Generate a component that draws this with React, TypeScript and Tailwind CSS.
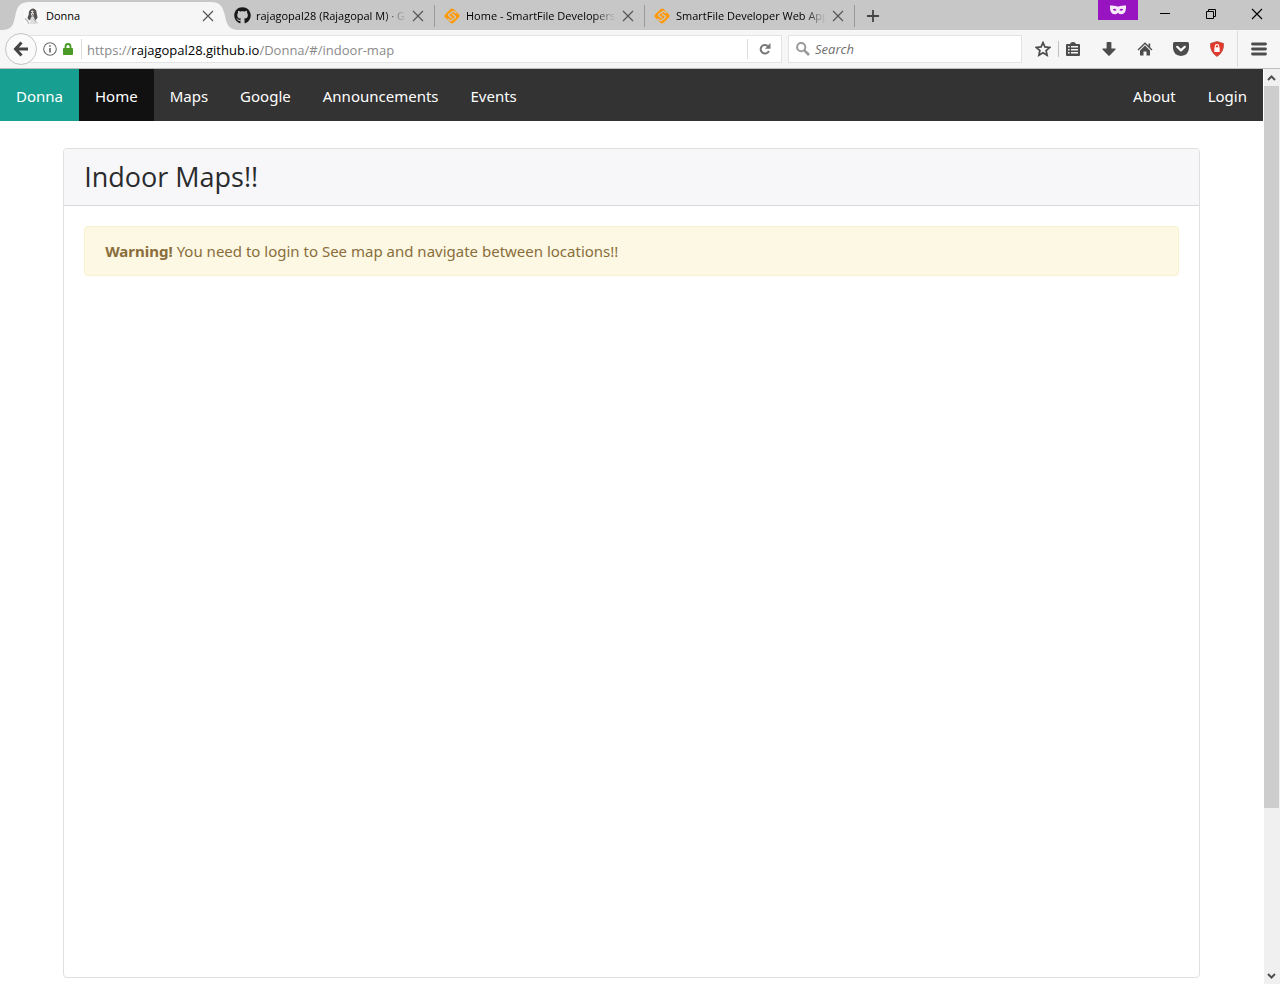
import type { ReactNode } from 'react';
import { FaGithub } from 'react-icons/fa';

function CloseIcon({ className }: { className: string }) {
  return (
    <svg viewBox="0 0 12 12" className={className} fill="none" stroke="currentColor" strokeWidth="1.2" aria-hidden="true">
      <path d="M1 1 11 11M11 1 1 11" />
    </svg>
  );
}

function SmartFileLogo() {
  return (
    <svg viewBox="0 0 16 16" className="h-4 w-4" aria-hidden="true">
      <path d="M8 .4 Q8.900 .4 9.600 1 L15.200 6.600 Q16 8 15.200 9.200 L9.600 14.800 Q8 16 6.400 14.800 L.8 9.200 Q0 8 .8 6.800 L6.400 1.200 Q7.100 .4 8 .4Z" fill="#ff9a0c" />
      <path
        d="M12.400 5.200 10.600 3.700 Q9.600 3 8.600 3.800 L5 6.300 Q4.200 7 5 7.700 L7.800 9.900M3.600 10.800 5.400 12.300 Q6.400 13 7.400 12.200 L11 9.700 Q11.800 9 11 8.300 L8.200 6.100"
        fill="none"
        stroke="#c7c7c7"
        strokeWidth="1.3"
      />
    </svg>
  );
}

function PortraitIcon() {
  return (
    <svg viewBox="0 0 16 16" className="h-4 w-4" aria-hidden="true">
      <rect width="16" height="16" fill="#fafafa" />
      <path d="M5 3.500 Q6.500 .2 9.500 .4 Q12.800 1.500 12.600 5 L13.600 9.500 11.500 12.500 8 11 5 12.200 3.400 9.800 4.600 7Z" fill="#555" />
      <path d="M7 3 Q9 1.800 9.900 4 L9.600 7 8.500 8.600 7 7Z" fill="#e2d8d4" />
      <path d="M7.500 8.500 9.500 8.300 11 12 14.500 14.500 13 16 6 16 6.500 11Z" fill="#ddd" />
      <path d="M1 10.500 3.500 13 5 16M10 11.500 12 14" stroke="#bbb" strokeWidth="1.300" fill="none" />
      <path d="M7 4.500h1M9 4.500h1M8 6.700h1" stroke="#444" strokeWidth=".8" />
    </svg>
  );
}

function Tab({ title, icon, active = false }: { title: string; icon: ReactNode; active?: boolean }) {
  return (
    <div className="relative flex h-[30px] w-[210px] items-center pt-px pr-[11px] pl-[9px]">
      {active && (
        <svg viewBox="0 0 240 30" className="absolute top-0 -left-[15px] h-[30px] w-[240px]" aria-hidden="true">
          <path d="M2 30C12 30 13 25 15 17C17 7 19 2 30 2H211C221 2 223 8 225 16C227 25 229 30 239 30Z" fill="#f6f6f6" />
        </svg>
      )}
      <button type="button" className="relative flex min-w-0 flex-1 items-center gap-[6px] text-left">
        <span className="flex w-4 shrink-0 justify-center">{icon}</span>
        <span
          className={
            active
              ? 'flex-1 overflow-hidden text-[11px] leading-4 whitespace-nowrap'
              : 'flex-1 overflow-hidden mask-r-from-85% mask-r-to-100% text-[11px] leading-4 whitespace-nowrap'
          }
        >
          {title}
        </span>
      </button>
      <button type="button" aria-label={`Close ${title}`} className="relative ml-[6px] shrink-0 text-[#555]">
        <CloseIcon className="h-3 w-3" />
      </button>
    </div>
  );
}

function TabStrip() {
  return (
    <header className="flex h-[30px] shrink-0 bg-[#c7c7c7] pl-[15px]">
      <Tab title="Donna" icon={<PortraitIcon />} active />
      <Tab title="rajagopal28 (Rajagopal M) · GitHub" icon={<FaGithub className="h-[17px] w-[17px] shrink-0 text-[#191717]" />} />
      <Divider />
      <Tab title="Home - SmartFile Developers" icon={<SmartFileLogo />} />
      <Divider />
      <Tab title="SmartFile Developer Web Application" icon={<SmartFileLogo />} />
      <Divider />
      <button type="button" aria-label="New tab" className="ml-3 text-[#444]">
        <svg viewBox="0 0 12 12" className="mt-px h-3 w-3" fill="none" stroke="currentColor" strokeWidth="1.8" aria-hidden="true">
          <path d="M6 0V12M0 6H12" />
        </svg>
      </button>
      <div className="ml-auto flex items-start">
        <span className="flex h-5 w-10 items-center justify-center bg-[#9714c0]">
          <svg viewBox="0 0 16 10" className="h-[10px] w-4" aria-label="Private browsing">
            <path
              fillRule="evenodd"
              d="M0 .5 Q3 .2 6 1 Q8 2 10 1 Q13 .2 16 .5 Q16.500 9.300 11 9.300 Q9.500 9.300 8 7.800 Q6.500 9.300 5 9.300 Q-.5 9.300 0 .5ZM2.800 4.500 Q4.500 6.600 6.600 5 Q4.800 2.800 2.800 4.500ZM13.200 4.500 Q11.500 6.600 9.400 5 Q11.200 2.800 13.200 4.500Z"
              fill="#f8e8fb"
            />
          </svg>
        </span>
        <button type="button" aria-label="Minimize" className="ml-1 flex h-7 w-[46px] items-center justify-center">
          <svg viewBox="0 0 10 10" className="h-[10px] w-[10px]" fill="none" stroke="#000" aria-hidden="true"><path d="M0 4.500H10" /></svg>
        </button>
        <button type="button" aria-label="Restore" className="flex h-7 w-[46px] items-center justify-center">
          <svg viewBox="0 0 10 10" className="h-[10px] w-[10px]" fill="none" stroke="#000" aria-hidden="true">
            <path d="M.5 2.500H7.500V9.500H.5ZM2.500 2.500V.5H9.500V7.500H7.500" />
          </svg>
        </button>
        <button type="button" aria-label="Close window" className="flex h-7 w-[46px] items-center justify-center text-black">
          <CloseIcon className="h-3 w-3" />
        </button>
      </div>
    </header>
  );
}

function Divider() {
  return <span className="mt-[5px] -ml-px h-[22px] w-px shrink-0 bg-[#999]" />;
}

function ToolButton({ label, children }: { label: string; children: ReactNode }) {
  return (
    <button type="button" aria-label={label} className="flex h-7 w-9 items-center justify-center text-[#4c4c4c]">
      <svg viewBox="0 0 16 16" className="h-4 w-4" fill="currentColor" aria-hidden="true">
        {children}
      </svg>
    </button>
  );
}

function Toolbar() {
  return (
    <div className="flex h-[39px] shrink-0 items-center border-b border-[#bdbdbd] bg-[#f6f6f6] pl-[5px]">
      <button
        type="button"
        aria-label="Back"
        className="z-10 -mr-4 flex h-8 w-8 shrink-0 items-center justify-center rounded-full border border-[#c4c4c4] bg-[#fafafa] text-[#444]"
      >
        <svg viewBox="0 0 16 16" className="h-4 w-4" fill="none" stroke="currentColor" strokeWidth="3" aria-hidden="true">
          <path d="M8.500 1.500 2.500 8 8.500 14.500M3 8H15" />
        </svg>
      </button>
      <div className="flex h-7 min-w-0 flex-1 items-center border border-[#e3e3e3] bg-white pl-[21px]">
        <svg viewBox="0 0 14 14" className="h-[14px] w-[14px] shrink-0" fill="none" stroke="#6d6d6d" aria-hidden="true">
          <circle cx="7" cy="7" r="6.300" strokeWidth="1.100" />
          <path d="M7 6V10.600M7 3.200V4.800" strokeWidth="1.700" />
        </svg>
        <svg viewBox="0 0 10 12" className="ml-[6px] h-3 w-[10px] shrink-0" aria-hidden="true">
          <path d="M2.500 6V3.500a2.500 2.500 0 0 1 5 0V6" fill="none" stroke="#4b9a25" strokeWidth="1.800" />
          <rect y="5" width="10" height="7" rx=".8" fill="#4b9a25" />
        </svg>
        <span className="mr-[5px] ml-2 h-5 w-px bg-[#ddd]" />
        <div role="textbox" aria-label="Address" tabIndex={0} className="min-w-0 flex-1 truncate pt-px text-[13px] leading-5 text-[#8a8a8a]">
          https://<span className="text-black">rajagopal28.github.io</span>/Donna/#/indoor-map
        </div>
        <button type="button" aria-label="Reload" className="flex h-5 w-[34px] items-center justify-center border-l border-[#ddd]">
          <svg viewBox="0 0 12 12" className="h-3 w-3" aria-hidden="true">
            <path d="M9 3.200A4.300 4.300 0 1 0 9.900 8" fill="none" stroke="#777" strokeWidth="2" />
            <path d="M11.500 0V5.700H5.800Z" fill="#777" />
          </svg>
        </button>
      </div>
      <label className="ml-[6px] flex h-7 w-[234px] shrink-0 items-center gap-[5px] border border-[#e3e3e3] bg-white pl-[7px]">
        <svg viewBox="0 0 14 14" className="h-[14px] w-[14px] shrink-0" fill="none" stroke="#999" aria-hidden="true">
          <circle cx="5.200" cy="5.200" r="4.100" strokeWidth="2" />
          <path d="M8.300 8.300 13 13" strokeWidth="2.600" />
        </svg>
        <input
          type="search"
          aria-label="Search"
          placeholder="Search"
          className="w-full min-w-0 pt-px text-[13px] outline-none placeholder:text-[#6f6f6f] placeholder:italic"
        />
      </label>
      <div className="ml-[5px] flex shrink-0 items-center">
        <button type="button" aria-label="Bookmark" className="flex h-7 w-8 items-center justify-center text-[#4c4c4c]">
          <svg viewBox="0 0 16 16" className="h-4 w-4" fill="none" stroke="currentColor" strokeWidth="1.700" aria-hidden="true">
            <path d="M8 1.600 9.900 5.900 14.700 6.400 11.100 9.500 12.100 14.200 8 11.800 3.900 14.200 4.900 9.500 1.300 6.400 6.100 5.900Z" />
          </svg>
        </button>
        <span className="-mr-1 -ml-px h-4 w-px bg-[#c0c0c0]" />
        <ToolButton label="Bookmarks list">
          <path fillRule="evenodd" d="M5 3 Q5.500 1 8 1 Q10.500 1 11 3H14Q15 3 15 4V14Q15 15 14 15H2Q1 15 1 14V4Q1 3 2 3ZM3 5V6.600H4.600V5ZM6 5V6.600H13V5ZM3 8V9.600H4.600V8ZM6 8V9.600H13V8ZM3 11V12.600H4.600V11ZM6 11V12.600H13V11Z" />
        </ToolButton>
        <ToolButton label="Downloads">
          <path d="M5.600 1.500Q5.600 1 6.100 1H9.900Q10.400 1 10.400 1.500V7.500H14.300Q15 7.800 14.500 8.500L8.700 14.500Q8 15.200 7.300 14.500L1.500 8.500Q1 7.800 1.700 7.500H5.600Z" />
        </ToolButton>
        <ToolButton label="Home">
          <path d="M8 4.600 13 9.500V14.500H9.500V10.500H6.500V14.500H3V9.500Z" />
          <path d="M1 9 8 2.200 15 9" fill="none" stroke="currentColor" strokeWidth="1.300" />
          <path d="M11.500 2.500H13.200V6.500L11.500 5Z" />
        </ToolButton>
        <ToolButton label="Pocket">
          <path d="M1.500 1H14.500Q16 1 16 2.500V7Q15.500 14.500 8 15Q.5 14.500 0 7V2.500Q0 1 1.500 1Z" />
          <path d="M4.200 5.800 8 9.400 11.800 5.800" fill="none" stroke="#fff" strokeWidth="2.200" strokeLinecap="round" strokeLinejoin="round" />
        </ToolButton>
        <ToolButton label="Ad blocker">
          <path d="M8 .5 14.500 2.500Q15 11 8 15.500Q1 11 1.500 2.500Z" fill="#e3382a" stroke="#b5493e" strokeWidth=".8" />
          <rect x="5.300" y="6.300" width="5.400" height="4.600" rx=".5" fill="#fff" />
          <path d="M6.300 6.500V5.300a1.700 1.700 0 0 1 3.400 0V6.500" fill="none" stroke="#fff" strokeWidth="1.100" />
        </ToolButton>
        <span className="ml-[2px] h-9 w-px bg-[#dcdcdc]" />
        <button type="button" aria-label="Menu" className="flex h-7 w-[42px] items-center justify-center text-[#4c4c4c]">
          <svg viewBox="0 0 16 14" className="h-[14px] w-4" stroke="currentColor" strokeWidth="2.800" strokeLinecap="round" aria-hidden="true">
            <path d="M1.500 2H14.500M1.500 7H14.500M1.500 12H14.500" />
          </svg>
        </button>
      </div>
    </div>
  );
}

const mainLinks = ['Maps', 'Google', 'Announcements', 'Events'];
const sideLinks = ['About', 'Login'];

function SiteNav() {
  return (
    <nav className="flex h-[52px] shrink-0 items-stretch bg-[#333] text-[15px] text-white">
      <a href="#/" className="flex items-center bg-[#17a092] px-4 pt-[2px]">Donna</a>
      <a href="#/home" className="flex items-center bg-[#111] px-4 pt-[2px]">Home</a>
      {mainLinks.map((name) => (
        <a key={name} href={`#/${name.toLowerCase()}`} className="flex items-center px-4 pt-[2px]">{name}</a>
      ))}
      <div className="ml-auto flex">
        {sideLinks.map((name) => (
          <a key={name} href={`#/${name.toLowerCase()}`} className="flex items-center px-4 pt-[2px]">{name}</a>
        ))}
      </div>
    </nav>
  );
}

function ScrollRail() {
  return (
    <div className="ml-px flex w-4 shrink-0 flex-col items-center bg-[#f0f0f0]" aria-hidden="true">
      <svg viewBox="0 0 16 17" className="h-[17px] w-4 shrink-0" fill="none" stroke="#505050" strokeWidth="2"><path d="M4 11 7.500 7.500 11 11" /></svg>
      <div className="mr-px flex w-[15px] flex-1 flex-col">
        <div className="h-[82%] bg-[#cdcdcd]" />
      </div>
      <svg viewBox="0 0 16 17" className="h-[17px] w-4 shrink-0" fill="none" stroke="#505050" strokeWidth="2"><path d="M4 7 7.500 10.500 11 7" /></svg>
    </div>
  );
}

export default function App() {
  return (
    <div className="flex h-screen flex-col bg-white font-['Open_Sans','Noto_Sans',sans-serif] text-black">
      <TabStrip />
      <Toolbar />
      <div className="flex min-h-0 flex-1 font-['Noto_Sans','Open_Sans',sans-serif]">
        <div className="flex min-w-0 flex-1 flex-col">
          <SiteNav />
          <main className="flex flex-1 flex-col px-[5%] pt-[27px] pb-[6px]">
            <section className="flex-1 rounded border border-[#dfdfdf]">
              <h1 className="rounded-t border-b border-[#d9d9d9] bg-[#f7f7f9] px-5 py-3 font-['Open_Sans','Noto_Sans',sans-serif] text-[27px] leading-8 text-[#292b2c]">Indoor Maps!!</h1>
              <div className="p-5">
                <p role="alert" className="rounded border border-[#faf2cc] bg-[#fcf8e3] px-5 py-3 text-[15px] leading-6 text-[#8a6d3b]">
                  <strong className="font-bold">Warning!</strong> You need to login to See map and navigate between locations!!
                </p>
              </div>
            </section>
          </main>
        </div>
        <ScrollRail />
      </div>
    </div>
  );
}
